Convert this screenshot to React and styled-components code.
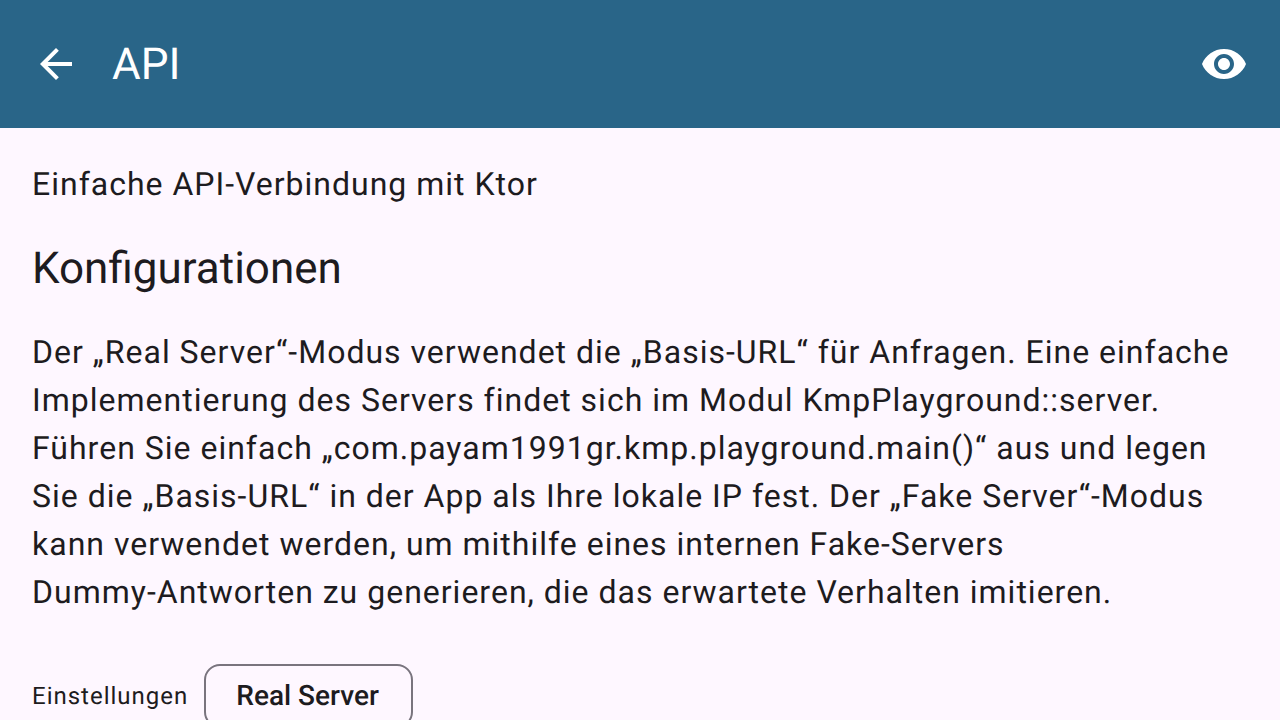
import React from "react";
import styled, { createGlobalStyle } from "styled-components";

const GlobalStyle = createGlobalStyle`
  *, *::before, *::after { box-sizing: border-box; }
  html { scrollbar-width: none; }
  body {
    margin: 0;
    background: #fef7ff;
    color: #1d1b20;
    font-family: Roboto, "Noto Sans", sans-serif;
    text-rendering: geometricPrecision;
  }
`;

const Screen = styled.div`
  min-height: 100vh;
`;

const TopBar = styled.header`
  display: flex;
  align-items: center;
  gap: 8px;
  height: 128px;
  padding: 0 8px;
  background: #296588;
  color: #ffffff;
`;

const IconButton = styled.button`
  display: flex;
  align-items: center;
  justify-content: center;
  width: 96px;
  height: 96px;
  padding: 0;
  border: 0;
  border-radius: 50%;
  background: transparent;
  color: inherit;
  cursor: pointer;

  svg {
    width: 48px;
    height: 48px;
    fill: currentColor;
  }
`;

const Title = styled.h1`
  flex: 1;
  margin: 0;
  font-size: 44px;
  line-height: 56px;
  font-weight: 400;
`;

const Content = styled.main`
  display: flex;
  flex-direction: column;
  gap: 32px;
  padding: 32px;
`;

const Paragraph = styled.p`
  margin: 0;
  font-size: 32px;
  line-height: 48px;
  letter-spacing: 1px;
`;

const Compound = styled.span`
  white-space: nowrap;
`;

const SectionTitle = styled.h2`
  margin: 0;
  font-size: 44px;
  line-height: 56px;
  font-weight: 400;
`;

const SettingRow = styled.div`
  display: flex;
  align-items: center;
  gap: 16px;
  padding-top: 16px;
`;

const SettingLabel = styled.span`
  font-size: 24px;
  line-height: 32px;
  letter-spacing: 1px;
`;

const ChipButton = styled.button`
  height: 64px;
  padding: 0 32px 0 30px;
  border: 2px solid #79747e;
  border-radius: 16px;
  background: transparent;
  color: inherit;
  font-family: inherit;
  font-size: 28px;
  line-height: 40px;
  font-weight: 500;
  text-rendering: inherit;
  cursor: pointer;
`;

export default function App() {
  return (
    <Screen>
      <GlobalStyle />
      <TopBar>
        <IconButton type="button" aria-label="Zurück">
          <svg viewBox="0 0 24 24" aria-hidden="true">
            <path d="M20 11H7.83l5.59-5.59L12 4l-8 8 8 8 1.41-1.41L7.83 13H20v-2z" />
          </svg>
        </IconButton>
        <Title>API</Title>
        <IconButton type="button" aria-label="Anzeigen">
          <svg viewBox="0 0 24 24" aria-hidden="true">
            <path d="M12 4.5C7 4.5 2.73 7.61 1 12c1.73 4.39 6 7.5 11 7.5s9.27-3.11 11-7.5c-1.73-4.39-6-7.5-11-7.5zM12 17c-2.76 0-5-2.24-5-5s2.24-5 5-5 5 2.24 5 5-2.24 5-5 5zm0-8c-1.66 0-3 1.34-3 3s1.34 3 3 3 3-1.34 3-3-1.34-3-3-3z" />
          </svg>
        </IconButton>
      </TopBar>
      <Content>
        <Paragraph>Einfache API-Verbindung mit Ktor</Paragraph>
        <SectionTitle>Konfigurationen</SectionTitle>
        <Paragraph>
          Der „Real Server“-Modus verwendet die „Basis-URL“ für Anfragen. Eine
          einfache Implementierung des Servers findet sich im Modul
          KmpPlayground::server. Führen Sie einfach
          „com.payam1991gr.kmp.playground.main()“ aus und legen Sie die
          „Basis-URL“ in der App als Ihre lokale IP fest. Der „Fake
          Server“-Modus kann verwendet werden, um mithilfe eines internen
          Fake-Servers <Compound>Dummy-Antworten</Compound> zu generieren, die
          das erwartete Verhalten imitieren.
        </Paragraph>
        <SettingRow>
          <SettingLabel id="settings-label">Einstellungen</SettingLabel>
          <ChipButton type="button" aria-describedby="settings-label">
            Real Server
          </ChipButton>
        </SettingRow>
      </Content>
    </Screen>
  );
}
